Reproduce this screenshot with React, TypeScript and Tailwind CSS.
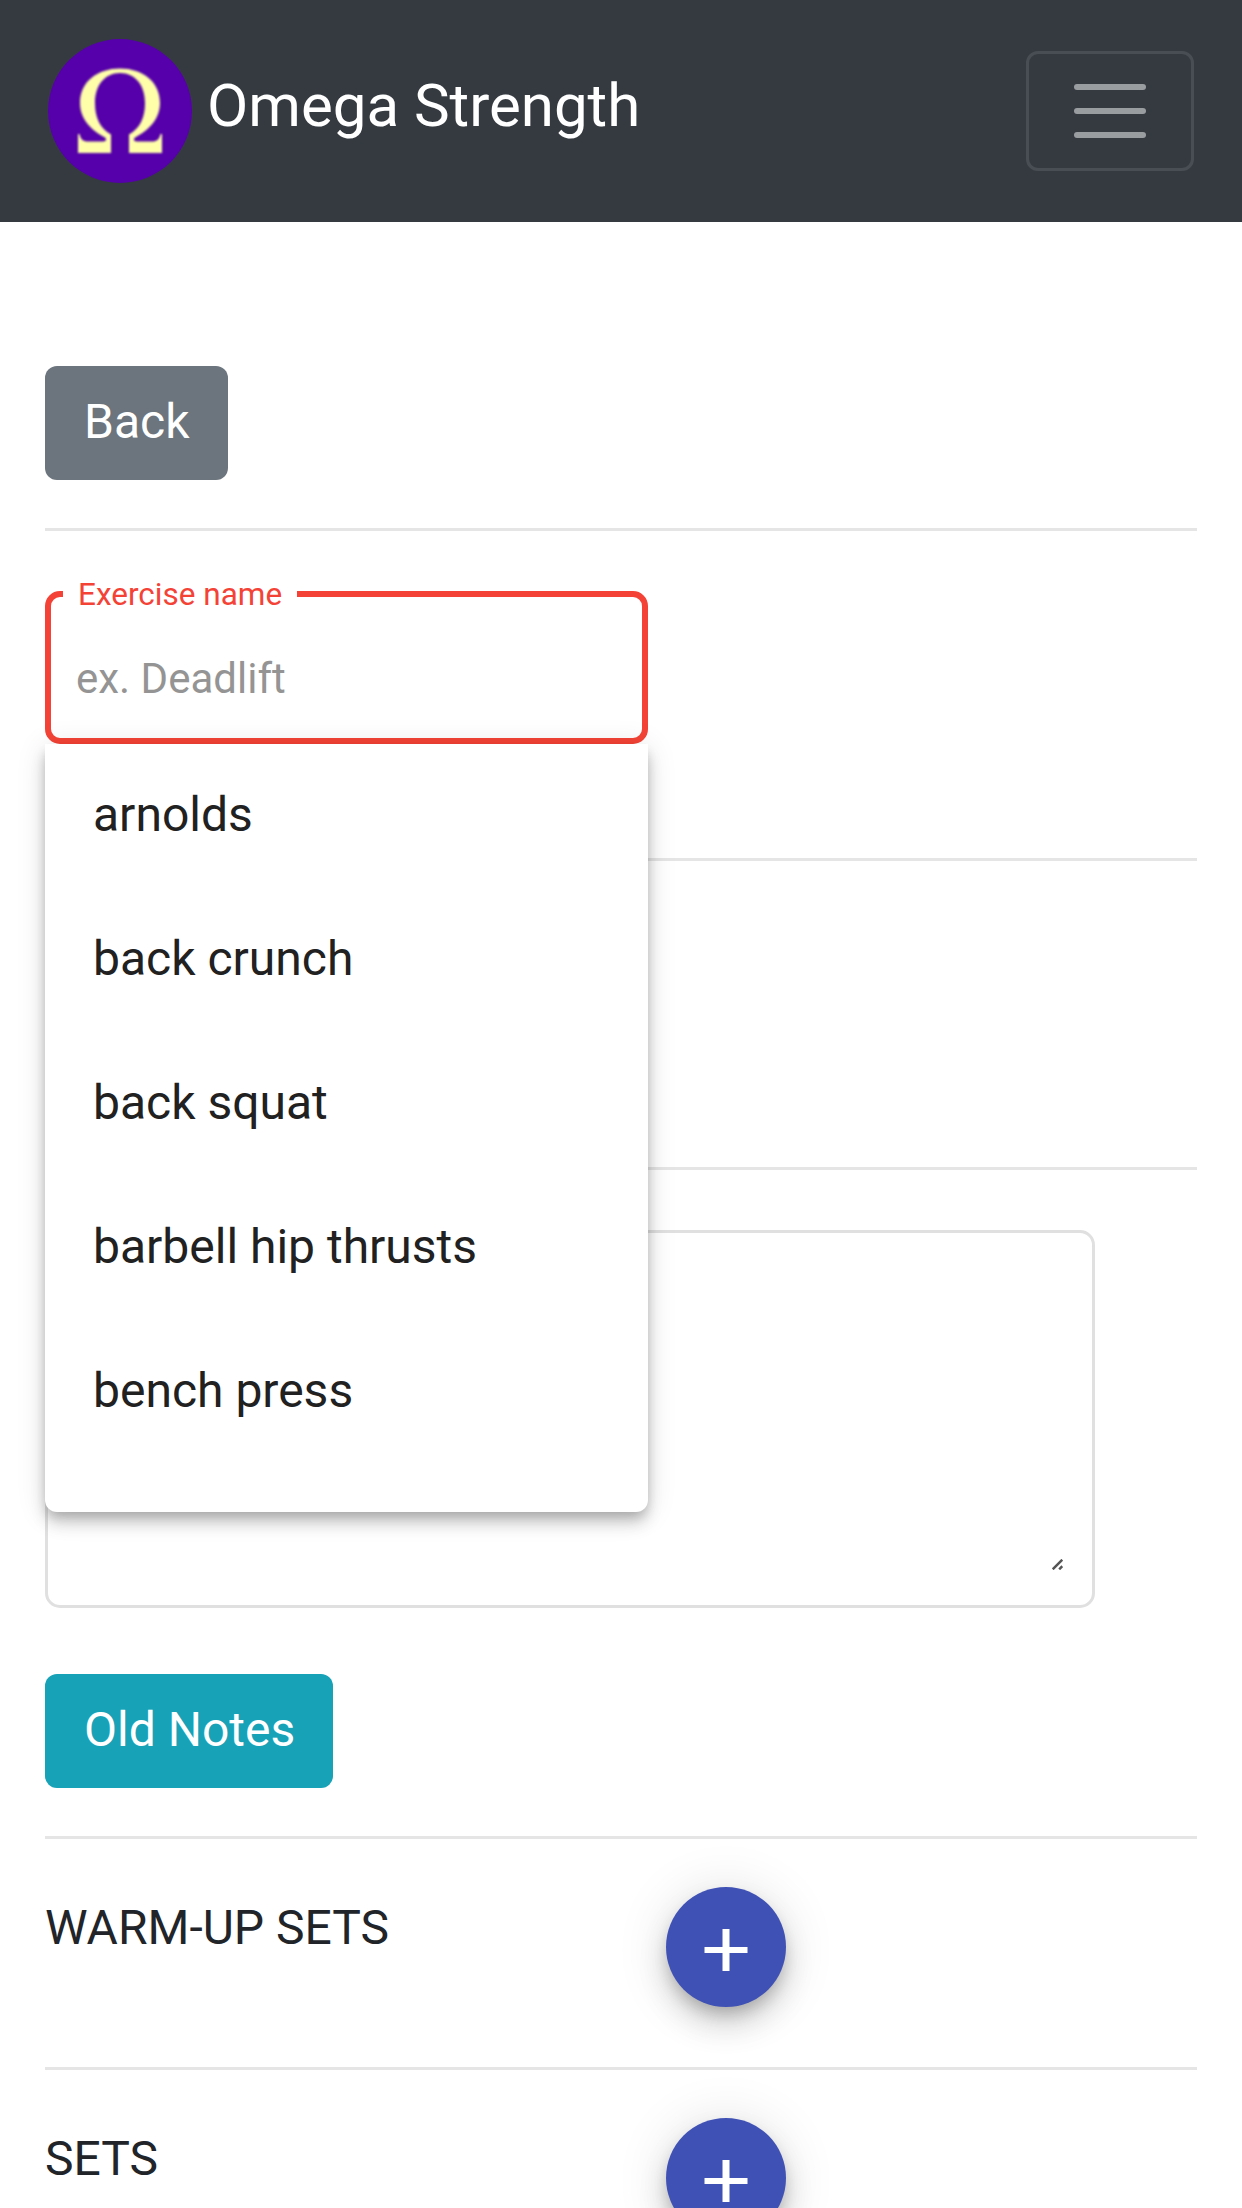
import React from "react";

const exercises = ["arnolds", "back crunch", "back squat", "barbell hip thrusts", "bench press"];

function Divider() {
  return <hr className="h-[3px] w-full border-0 bg-black/10" />;
}

function Logo() {
  return (
    <div className="flex h-36 w-36 items-center justify-center rounded-full bg-[#5500aa]">
      <svg viewBox="0 0 86 86" className="h-[86px] w-[86px] overflow-visible blur-[0.8px]" fill="#ffffaa">
        <path
          fillRule="evenodd"
          d="M1 66H2.500C3.500 71 6 73.500 11 73.500H25C28.500 73.500 30.500 72 28 69.500C14 62 3 51 3 35C3 14 20 0.500 43 0.500C66 0.500 83 14 83 35C83 51 72 62 58 69.500C55.500 72 57.500 73.500 61 73.500H75C80 73.500 82.500 71 83.500 66H85V85H52V66.500C63 60 68 50 68 35C68 17 58 5 43 5C28 5 18 17 18 35C18 50 23 60 34 66.500V85H1Z"
        />
      </svg>
    </div>
  );
}

function AddButton() {
  return (
    <button className="flex h-[120px] w-[120px] shrink-0 items-center justify-center rounded-full bg-[#3f51b5] pt-[6px] shadow-[0_9px_15px_-3px_rgba(0,0,0,0.2),0_18px_30px_0_rgba(0,0,0,0.14),0_3px_54px_0_rgba(0,0,0,0.12)]">
      <svg viewBox="0 0 44 42" className="h-[42px] w-[44px]" fill="#fff">
        <path d="M18.500 0h7v18h18v6h-18v18h-7V24H.5v-6h18z" />
      </svg>
    </button>
  );
}

function SetRow({ title }: { title: string }) {
  return (
    <div className="flex h-[228px] items-start pt-[48px]">
      <h2 className="w-[621px] pt-[5px] text-[48px] leading-[72px] font-normal text-[#212529]">{title}</h2>
      <AddButton />
    </div>
  );
}

function ExerciseField() {
  return (
    <div className="relative h-[153px] w-[603px]">
      <div className="flex h-full items-center rounded-[15px] border-[6px] border-[#f44336] pt-[22px] pl-[25px] text-[42px] leading-[48px] text-[#949494]">
        ex. Deadlift
      </div>
      <label className="absolute -top-[14px] left-[18px] flex h-[36px] w-[234px] items-center bg-white pl-[15px] text-[31.5px] leading-[36px] whitespace-nowrap text-[#f44336]">
        Exercise name
      </label>
      <ul className="absolute top-[153px] left-0 z-10 h-[768px] w-[603px] overflow-hidden rounded-b-[12px] bg-white shadow-[0_6px_12px_-3px_rgba(0,0,0,0.2),0_12px_15px_0_rgba(0,0,0,0.14),0_3px_30px_0_rgba(0,0,0,0.12)]">
        {exercises.map((name) => (
          <li key={name} className="h-36 px-12 text-[48px] leading-[142px] text-[#212121]">
            {name}
          </li>
        ))}
      </ul>
    </div>
  );
}

export default function App() {
  return (
    <div className="h-[2208px] w-[1242px] overflow-hidden bg-white font-['Roboto',sans-serif]">
      <nav className="flex h-[222px] items-center justify-between bg-[#343a40] px-12">
        <div className="flex items-center gap-[15px]">
          <Logo />
          <span className="pb-[10px] text-[60px] leading-[90px] text-white">Omega Strength</span>
        </div>
        <button className="flex h-[120px] w-[168px] flex-col items-center justify-center gap-[18px] rounded-[12px] border-[3px] border-white/10">
          <span className="h-[6px] w-[72px] rounded-full bg-white/50" />
          <span className="h-[6px] w-[72px] rounded-full bg-white/50" />
          <span className="h-[6px] w-[72px] rounded-full bg-white/50" />
        </button>
      </nav>

      <main className="flex flex-col items-start px-[45px] pt-36">
        <button className="mb-12 h-[114px] w-[183px] rounded-[12px] bg-[#6c757d] pb-[2px] pl-[39px] text-left text-[48px] leading-[72px] text-white">
          Back
        </button>
        <Divider />
        <div className="h-[327px] pt-[60px]">
          <ExerciseField />
        </div>
        <Divider />
        <div className="h-[306px]" />
        <Divider />
        <div className="mt-[60px] flex h-[378px] w-[1050px] items-end justify-end rounded-[15px] border-[3px] border-[#e0e0e0] pr-[29px] pb-[35px]">
          <svg viewBox="0 0 11 11" className="h-[11px] w-[11px]" stroke="#555" strokeWidth="2.5">
            <path d="M.7 10.300 10.300.7M7.200 10.300l3.100-3.100" />
          </svg>
        </div>
        <button className="mt-[66px] mb-12 h-[114px] w-[288px] rounded-[12px] bg-[#17a2b8] pb-[2px] pl-[39px] text-left text-[48px] leading-[72px] whitespace-nowrap text-white">
          Old Notes
        </button>
        <Divider />
        <SetRow title="WARM-UP SETS" />
        <Divider />
        <SetRow title="SETS" />
      </main>
    </div>
  );
}
